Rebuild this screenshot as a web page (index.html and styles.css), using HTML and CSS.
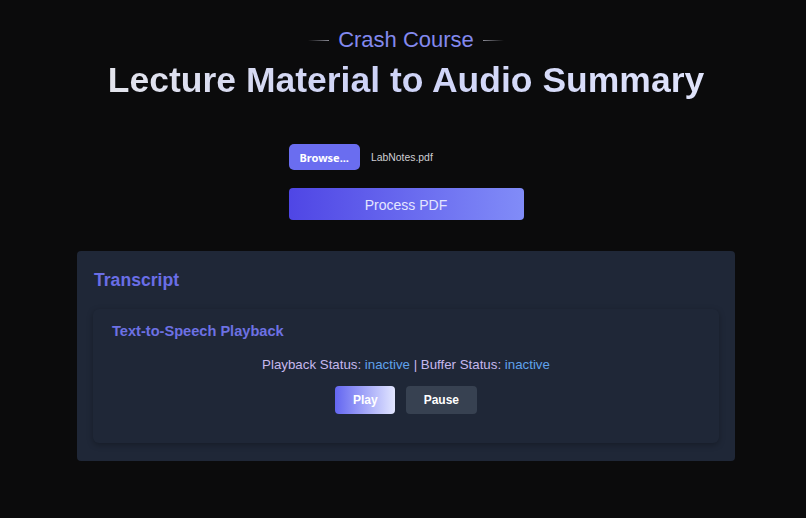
FILE: index.html
```html
<!DOCTYPE html>
<html lang="en">
<head>
<meta charset="utf-8">
<title>Lecture Material to Audio Summary</title>
<link rel="stylesheet" href="styles.css">
</head>
<body>
<main class="page">
  <header class="hero">
    <div class="eyebrow"><span class="rule rule-left"></span><span class="eyebrow-text">Crash Course</span><span class="rule rule-right"></span></div>
    <h1 class="title">Lecture Material to Audio Summary</h1>
  </header>

  <section class="upload">
    <div class="file-row">
      <button class="browse" type="button">Browse...</button>
      <span class="file-name">LabNotes.pdf</span>
    </div>
    <button class="process" type="button">Process PDF</button>
  </section>

  <section class="card">
    <h2 class="card-title">Transcript</h2>
    <div class="tts">
      <h3 class="tts-title">Text-to-Speech Playback</h3>
      <p class="status">Playback Status: <span class="value">inactive</span> | Buffer Status: <span class="value">inactive</span></p>
      <div class="controls">
        <button class="btn btn-play" type="button">Play</button>
        <button class="btn btn-pause" type="button">Pause</button>
      </div>
    </div>
  </section>
</main>
</body>
</html>
```

FILE: styles.css
```css
* { box-sizing: border-box; }

html, body { height: 100%; }

body {
  margin: 0;
  padding: 0 0 0 6px;
  background: #0b0b0c;
  font-family: "Liberation Sans", Arial, sans-serif;
  color: #e5e7eb;
}

.page {
  width: 658px;
  margin: 0 auto;
  display: flex;
  flex-direction: column;
  align-items: center;
}

.hero {
  padding-top: 27px;
  display: flex;
  flex-direction: column;
  align-items: center;
}

.eyebrow {
  display: flex;
  align-items: center;
  gap: 9px;
  height: 26px;
}

.eyebrow-text {
  font-size: 22px;
  line-height: 26px;
  color: #8389ee;
}

.rule {
  display: block;
  width: 21px;
  height: 1px;
}

.rule-left { background: linear-gradient(90deg, rgba(140,140,150,0), #8a8a94); }
.rule-right { background: linear-gradient(90deg, #8a8a94, rgba(140,140,150,0)); }

.title {
  margin: 7px 0 0;
  font-size: 35.5px;
  line-height: 40px;
  font-weight: 700;
  white-space: nowrap;
  background: linear-gradient(90deg, #e3e4ec 0%, #cdd2f7 45%, #dfe3fb 100%);
  -webkit-background-clip: text;
  background-clip: text;
  color: transparent;
}

.upload {
  margin-top: 44px;
  width: 235px;
  display: flex;
  flex-direction: column;
  align-items: stretch;
}

.file-row {
  display: flex;
  align-items: center;
  gap: 11px;
}

.browse {
  height: 26px;
  padding: 0 11px;
  border: 0;
  border-radius: 5px;
  background: #6a6df0;
  color: #ffffff;
  font-family: "Noto Sans", "Open Sans", sans-serif;
  font-weight: 700;
  font-size: 11px;
}

.file-name {
  font-size: 10.4px;
  color: #cfcfd4;
}

.process {
  margin-top: 18px;
  height: 32px;
  padding-top: 2px;
  border: 0;
  border-radius: 4px;
  background: linear-gradient(90deg, #4f46e5 0%, #818cf8 100%);
  color: #e4e6ff;
  font-family: "Liberation Sans", Arial, sans-serif;
  font-size: 14px;
}

.card {
  margin-top: 31px;
  width: 658px;
  background: #1f2737;
  border-radius: 4px;
  padding: 16px 16px 18px;
}

.card-title {
  margin: 2px 0 0 1px;
  font-size: 17.6px;
  line-height: 22px;
  font-weight: 700;
  color: #6a6ee6;
}

.tts {
  margin-top: 18px;
  background: #1f2737;
  border-radius: 6px;
  box-shadow: 0 2px 6px rgba(0, 0, 0, 0.28);
  padding: 13px 18px 29px;
  display: flex;
  flex-direction: column;
  align-items: stretch;
}

.tts-title {
  margin: 0 0 0 1px;
  font-size: 14.6px;
  line-height: 18px;
  font-weight: 700;
  color: #6d71e3;
}

.status {
  margin: 17px 0 0;
  text-align: center;
  font-size: 13.3px;
  line-height: 16px;
  color: #c6b8ee;
}

.value { color: #5fa2ec; }

.controls {
  margin-top: 13px;
  display: flex;
  justify-content: center;
  gap: 11px;
}

.btn {
  height: 28px;
  padding: 0 17.5px;
  border: 0;
  border-radius: 4px;
  font-family: "Liberation Sans", Arial, sans-serif;
  font-size: 12px;
  font-weight: 700;
  color: #ffffff;
}

.btn-play { background: linear-gradient(90deg, #6366f1 0%, #e2e6ff 100%); }

.btn-pause { background: #374151; }
```
